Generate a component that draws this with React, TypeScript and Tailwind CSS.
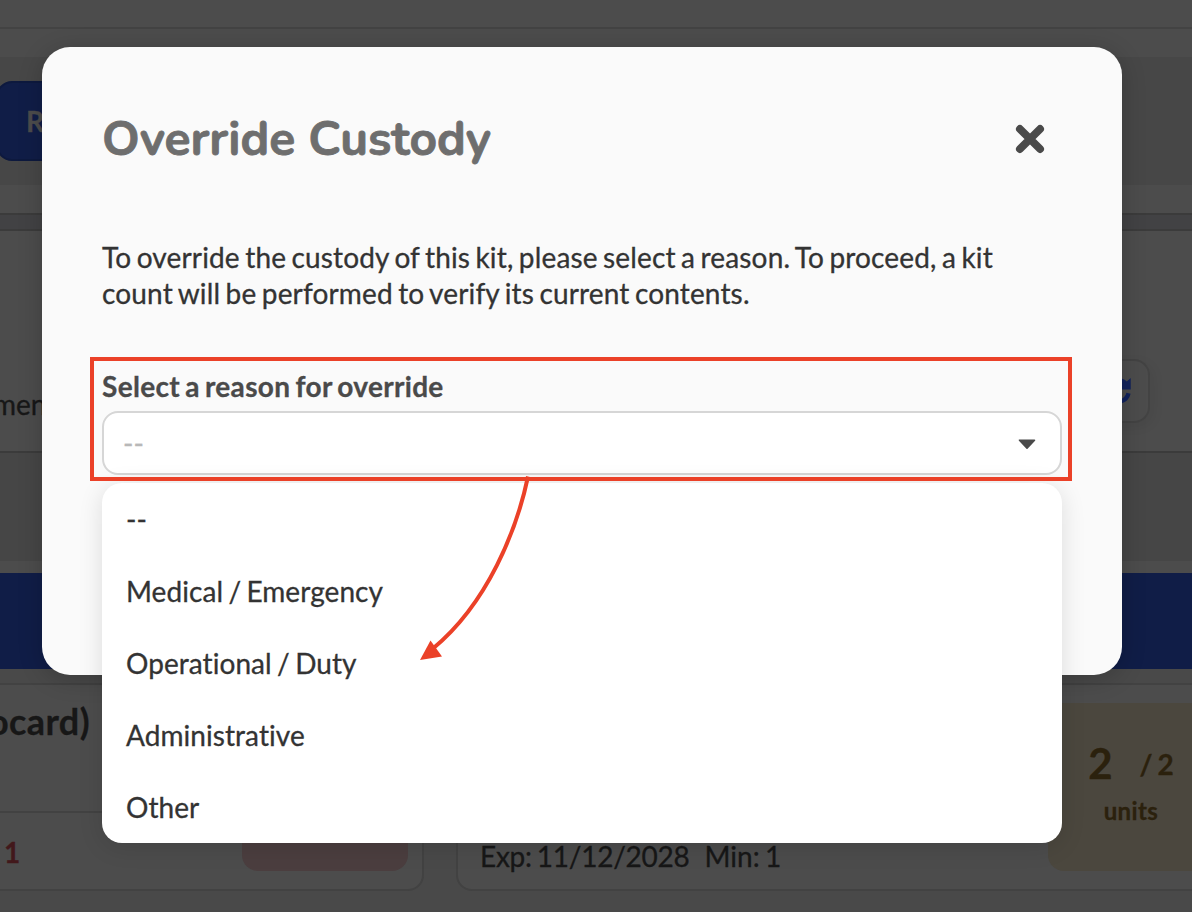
import { useState } from 'react';

const reasons = ['--', 'Medical / Emergency', 'Operational / Duty', 'Administrative', 'Other'];

const CloseIcon = () => (
  <svg width="30" height="30" viewBox="0 0 30 30" fill="none">
    <path d="M4.9 4.9L25.1 25.1M25.1 4.9L4.9 25.1" stroke="#4a4a4a" strokeWidth="7.8" strokeLinecap="round" />
  </svg>
);

const CaretIcon = () => (
  <svg width="18" height="11" viewBox="0 0 18 11">
    <path d="M1.5 1.2H16.5L9 9.2Z" fill="#4a4a4a" stroke="#4a4a4a" strokeWidth="1.6" strokeLinejoin="round" />
  </svg>
);

const RefreshIcon = () => (
  <svg width="28" height="28" viewBox="0 0 28 28" fill="none">
    <path d="M3.5 12.3A10.7 10.7 0 0 1 21.5 6.4" stroke="#11225c" strokeWidth="4.3" />
    <path d="M15 12.5H26.7V1L22.5 4.8L17 7Z" fill="#11225c" />
    <path d="M24.5 16.3A10.7 10.7 0 0 1 6.5 21.6" stroke="#11225c" strokeWidth="4.3" />
    <path d="M13 16.3H1.3V27L5.5 23.5Z" fill="#11225c" />
  </svg>
);

/* Kit page, dimmed behind the modal */
const KitPage = () => (
  <div className="flex h-full w-full flex-col text-[#171717]">
    <div className="h-[29px] shrink-0 border-b-2 border-[#434343]" />
    <div className="h-7 shrink-0" />
    <div className="flex h-32 shrink-0 items-center bg-[#474747]">
      <div className="-ml-1 flex h-20 w-60 items-center rounded-2xl border-2 border-[#0d193e] bg-[#101d47] pl-7 text-[28px] font-bold text-[#4c4c4c]">
        Return
      </div>
    </div>
    <div className="h-7 shrink-0" />
    <div className="h-[18px] shrink-0 border-y-2 border-[#3b3b3b] bg-[#424244]" />

    <div className="flex h-[222px] shrink-0 items-end justify-between border-b-2 border-[#3b3b3b] pr-[42px] pb-7">
      <span className="-ml-[7px] mb-[1px] text-[28px] leading-9">ment</span>
      <div className="flex h-16 w-16 items-center justify-center rounded-2xl border-2 border-[#434343] shadow-[4px_4px_12px_rgba(0,0,0,0.06)]">
        <RefreshIcon />
      </div>
    </div>
    <div className="h-[108px] shrink-0 bg-[#464646]" />
    <div className="h-3 shrink-0" />
    <div className="h-24 shrink-0 bg-[#101d47]" />

    <div className="flex grow gap-8 bg-[#494949] pt-3.5">
      <div className="h-[208px] w-[424px] shrink-0 rounded-br-2xl border-y-2 border-r-2 border-[#424242] bg-[#4c4c4c]">
        <div className="h-[128px] border-b-2 border-[#424242] pt-[14px] text-[36px] leading-[44px] font-bold">
          <span className="-ml-3 tracking-[0.4px]">ocard)</span>
        </div>
        <div className="flex h-[76px] justify-between pr-3.5">
          <span className="ml-1 pt-[21px] text-[28px] leading-9 font-bold text-[#42181b]">1</span>
          <div className="h-[58px] w-[166px] rounded-b-2xl bg-[#4b3e3f]" />
        </div>
      </div>
      <div className="flex h-[208px] w-[760px] shrink-0 justify-between rounded-2xl border-2 border-[#424242] bg-[#4c4c4c]">
        <div className="flex gap-[15px] self-end pb-[15px] pl-[22px] text-[28px] leading-9">
          <span className="tracking-[-0.25px]">Exp: 11/12/2028</span>
          <span>Min: 1</span>
        </div>
        <div className="mt-[18px] flex h-[168px] w-[166px] flex-col items-center rounded-2xl bg-[#4b473e] pt-[34px] font-bold text-[#2b210d]">
          <div className="flex items-center gap-[27px] leading-[50px]">
            <span className="text-[42px]">2</span>
            <span className="pt-0.5 text-[28px]">/ 2</span>
          </div>
          <span className="-mt-[1px] text-2xl leading-[46px] tracking-[0.4px]">units</span>
        </div>
      </div>
    </div>
  </div>
);

/* Red frame and arrow that point from the select to its options */
const Callout = () => (
  <>
    <div className="pointer-events-none absolute top-[310px] left-12 h-[124px] w-[982px] border-4 border-[#eb4128]" />
    <svg className="pointer-events-none absolute top-[423px] left-[368px]" width="130" height="200" viewBox="0 0 130 200">
      <path d="M118 6.5C107 59 78 133 23 178.5" fill="none" stroke="#eb4128" strokeWidth="4" />
      <path d="M10 190L20.5 170.5L32 186.5Z" fill="#eb4128" />
    </svg>
  </>
);

export default function App() {
  const [reason, setReason] = useState('--');

  return (
    <div className="relative h-[912px] w-[1192px] overflow-hidden bg-[#4c4c4c] font-['Lato',sans-serif] [font-variant-ligatures:none] [word-spacing:-1.9px] [-webkit-text-stroke:0.3px]">
      <KitPage />

      <div className="absolute top-[47px] left-[42px] h-[628px] w-[1080px] rounded-[28px] bg-[#fafafa] px-[60px] text-[#333] shadow-[0_4px_24px_rgba(0,0,0,0.2)]">
        <div className="flex h-[184px] items-center justify-between pr-[17px]">
          <h1 className="font-['Nunito','Lato',sans-serif] text-[48px] font-bold text-[#6e6e6e] [word-spacing:0] [-webkit-text-stroke:0.8px]">Override Custody</h1>
          <button aria-label="Close">
            <CloseIcon />
          </button>
        </div>

        <p className="mt-2 w-[940px] text-[28px] leading-9 tracking-[0.15px]">
          To override the custody of this kit, please select a reason. To proceed, a kit count will be performed to verify its current contents.
        </p>

        <label className="mt-[57px] block text-[28px] leading-9 font-bold tracking-[0.32px] text-[#4a4a4a]">Select a reason for override</label>
        <button className="mt-[7px] flex h-16 w-full items-center justify-between rounded-2xl border-2 border-[#d6d6d6] bg-white pr-6 pl-[19px] text-[28px] text-[#b8b8b8]">
          <span>{reason}</span>
          <span className="pt-[3px]">
            <CaretIcon />
          </span>
        </button>

        <ul className="absolute top-[436px] left-[60px] w-[960px] rounded-[20px] bg-white shadow-[0_4px_24px_rgba(0,0,0,0.12)]">
          {reasons.map((item) => (
            <li key={item} onClick={() => setReason(item)} className="flex h-[72px] items-center px-6 text-[28px] tracking-[0.06px]">
              {item}
            </li>
          ))}
        </ul>

        <Callout />
      </div>
    </div>
  );
}
